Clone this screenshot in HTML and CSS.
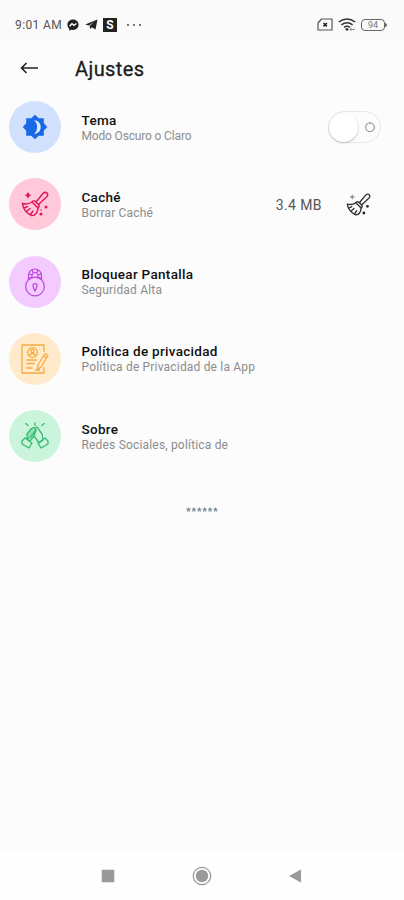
FILE: index.html
```html
<!DOCTYPE html>
<html lang="es">
<head>
<meta charset="utf-8">
<title>Ajustes</title>
<link rel="stylesheet" href="styles.css">
</head>
<body>
<svg class="defs" width="0" height="0" aria-hidden="true">
  <symbol id="broom" viewBox="0 0 28 28">
    <g fill="none" stroke="currentColor" stroke-width="1.5" stroke-linejoin="round" stroke-linecap="round">
      <path d="M15 12 L22 3.5 Q24 1.5 26 3 Q27.500 5 25.500 7 L17.500 14.500"/>
      <path d="M11 12 Q13 9.500 15 12 L17.500 14.500 Q19 16 17 18 Z"/>
      <path d="M11 12 Q7 15 1.500 13.500 Q2 21 10.500 25.500 Q16 26 17 18"/>
      <path d="M3 18 L6.500 16.500 M5.500 21.500 L9 18.500 M9.500 24.500 L12 21"/>
    </g>
  </symbol>
</svg>
<div class="screen">
  <header class="status">
    <span class="time">9:01 AM</span>
    <svg class="messenger" width="12" height="12" viewBox="0 0 12 12"><path fill="#222" d="M6 .5C2.700.5.4 2.800.4 5.800c0 1.700.7 3 1.800 3.900v2l1.800-1c.6.2 1.300.3 2 .3 3.300 0 5.600-2.300 5.600-5.200S9.300.5 6 .5z"/><path d="M2.500 7.300 5 4.700l2 1.700 2.500-1.900" fill="none" stroke="#fafafa" stroke-width="1.400"/></svg>
    <svg class="telegram" width="13" height="11" viewBox="0 0 13 11"><path fill="#222" d="M.3 5.400 12.500.5l-2 10-3.600-2.300-1.800 1.900-.5-3.300 5-4-6 3.600z"/></svg>
    <span class="app-badge">S</span>
    <span class="more"><i></i><i></i><i></i></span>
    <svg class="sim" width="16" height="13" viewBox="0 0 16 13"><path d="M4.500 1H15v11H1V5z" fill="none" stroke="#555" stroke-width="1.200" stroke-linejoin="round"/><path d="m6.500 5 3.400 3.400m0-3.400L6.500 8.400" stroke="#222" stroke-width="1.500"/></svg>
    <svg class="wifi" width="18" height="14" viewBox="0 0 18 14"><g fill="none" stroke="#333" stroke-width="1.500"><path d="M.8 4Q9-2 17.200 4M3.400 6.800q5.600-4.200 11.200 0M6 9.400q3-2.200 6 0"/></g><path d="m9 13-2-2q2-1.500 4 0z" fill="#222"/><path d="M12 11.500h5M13.500 10 12 11.500l1.500 1.500" fill="none" stroke="#777" stroke-width=".8"/></svg>
    <span class="battery">94</span>
  </header>
  <div class="toolbar">
    <svg width="19" height="14" viewBox="0 0 19 14"><path d="M18 6H1.500M6.500 1 1.500 6l5 5" fill="none" stroke="#222" stroke-width="1.600"/></svg>
    <h1>Ajustes</h1>
  </div>
  <main class="list">
    <section class="row">
      <span class="disc blue"><svg width="26" height="26" viewBox="0 0 26 26"><path fill="#1769e8" d="m13 .7 3.700 3.500h5.100v5.100l3.500 3.700-3.500 3.700v5.100h-5.100L13 25.300l-3.700-3.500H4.200v-5.100L.7 13l3.500-3.700V4.200h5.100z"/><path fill="#dceaff" d="M12 6.200c9 .1 9 13.500 0 13.600 4.200-3 4.200-10.600 0-13.600z"/></svg></span>
      <div class="copy"><h2>Tema</h2><p class="tight">Modo Oscuro o Claro</p></div>
      <span class="toggle"><svg width="12" height="12" viewBox="0 0 12 12"><circle cx="6" cy="6.300" r="4.300" fill="none" stroke="#999" stroke-width="1.200"/><path d="M6 .8v2" stroke="#999" stroke-width="1"/></svg></span>
    </section>
    <section class="row">
      <span class="disc pink"><svg width="28" height="28" viewBox="0 0 28 28"><use href="#broom"/><g fill="currentColor"><path d="m7 2 1.200 2 2 1.200-2 1.200-1.200 2-1.200-2-2-1.200 2-1.200z"/><circle cx="25" cy="17" r="1.500"/><circle cx="20" cy="24" r="1.600"/><circle cx="20" cy="20" r=".8"/></g></svg></span>
      <div class="copy"><h2>Caché</h2><p>Borrar Caché</p></div>
      <span class="size">3.4 MB</span>
      <svg class="clean" width="25" height="25" viewBox="0 0 28 28"><use href="#broom"/><path d="M7 3v5M4.500 5.500h5" stroke="#888" stroke-width="1.300"/><g fill="#222"><circle cx="24" cy="16" r="1.500"/><circle cx="20" cy="23.500" r="1.600"/></g></svg>
    </section>
    <section class="row">
      <span class="disc purple"><svg width="22" height="30" viewBox="0 0 22 30"><g fill="none" stroke="currentColor" stroke-width="1.200"><circle cx="11" cy="19.500" r="9.300"/><path d="M4.500 13V8.500a6.500 6.500 0 0 1 13 0V13M8 11V8.500a3 3 0 0 1 6 0V11M5 7l3 1M8 3l1.500 3M14 3l-1.500 3M17 7l-3 1M4.500 11.500 8 10M17.500 11.500 14 10"/><path d="M11 24c-1-2-2-4-2-5.300a2 2 0 0 1 4 0c0 1.300-1 3.300-2 5.300z"/></g></svg></span>
      <div class="copy"><h2>Bloquear Pantalla</h2><p>Seguridad Alta</p></div>
    </section>
    <section class="row">
      <span class="disc amber"><svg width="28" height="30" viewBox="0 0 28 30"><g fill="none" stroke="currentColor" stroke-width="1.300" stroke-linejoin="round"><path d="M23 8V1H1v28h22v-6"/><circle cx="11.500" cy="8.500" r="4.800"/><circle cx="11.500" cy="7" r="1.600"/><path d="M8 12q3.500-5 7 0M5.500 16h10M5.500 19.500h8M5.500 24h6"/><path d="M24 9.500 27 11.500 20 23l-3.500 2.500.5-4.500z"/><path d="M22.500 12 25.500 14M14 26h5"/></g></svg></span>
      <div class="copy"><h2>Política de privacidad</h2><p>Política de Privacidad de la App</p></div>
    </section>
    <section class="row">
      <span class="disc green"><svg width="28" height="28" viewBox="0 0 28 28"><g fill="none" stroke="currentColor" stroke-width="1.300" stroke-linejoin="round" stroke-linecap="round"><path d="M14 1v2.500M5 1.500 7 3.500M23 1.500 21 3.500"/><path fill="#8fe0b3" d="M6 17V12l4-5q2-2 3.500-1L15 8l-5 7z"/><path d="m14 6 2-1 5 7 1 6M15 8l-2 6-4 5-3-2M13 14l5 7 4-3M1 19l3-3 7 5-3 5-7-4zM27 19l-3-3-7 5 3 5 7-4z"/></g></svg></span>
      <div class="copy"><h2>Sobre</h2><p>Redes Sociales, política de</p></div>
    </section>
  </main>
  <div class="stars"><i></i><i></i><i></i><i></i><i></i><i></i></div>
  <nav class="nav">
    <svg width="14" height="14" viewBox="0 0 14 14"><rect x=".7" y=".7" width="12.600" height="12.600" rx="1" fill="#999"/></svg>
    <svg width="20" height="20" viewBox="0 0 20 20"><circle cx="10" cy="10" r="8.700" fill="none" stroke="#999" stroke-width="1.200"/><circle cx="10" cy="10" r="6.200" fill="#999"/></svg>
    <svg width="14" height="14" viewBox="0 0 14 14"><path d="M1 7 13 .5v13z" fill="#999"/></svg>
  </nav>
</div>
</body>
</html>
```
FILE: styles.css
```css
* { box-sizing: border-box; }
body { margin: 0; background: #fcfcfc; font-family: Roboto, "Liberation Sans", sans-serif; }
h1, h2, p { margin: 0; white-space: nowrap; }
svg { display: block; flex: none; }
.defs { display: none; }
.screen { width: 404px; height: 900px; display: flex; flex-direction: column; overflow: hidden; }

.status { height: 38px; background: #fafafa; display: flex; align-items: center; padding: 11px 17px 0 15px; color: #555; }
.time { width: 48px; font-size: 12px; letter-spacing: .4px; line-height: 14px; white-space: nowrap; }
.messenger { margin-left: 4px; }
.telegram { margin-left: 6px; }
.app-badge { width: 14px; height: 14px; margin-left: 5px; background: #222; color: #fff; font-size: 12px; font-weight: 700; line-height: 14px; text-align: center; }
.more { display: flex; gap: 4px; margin-left: 10px; }
.more i { width: 2px; height: 2px; background: #777; }
.sim { margin-left: auto; }
.wifi { margin-left: 5px; }
.battery { width: 24px; height: 12px; margin: 0 2px 0 5px; border: 1.5px solid #666; border-radius: 4px; font-size: 9px; line-height: 10px; text-align: center; color: #777; position: relative; }
.battery::after { content: ""; position: absolute; right: -3px; top: 3px; width: 2px; height: 4px; border-radius: 0 2px 2px 0; background: #666; }

.toolbar { height: 63px; display: flex; align-items: center; padding: 0 0 2px 20px; gap: 36px; }
h1 { font-size: 20px; line-height: 24px; font-weight: 400; letter-spacing: .4px; color: #1c1c1c; -webkit-text-stroke: .3px #1c1c1c; }

.row { height: 77.3px; display: flex; align-items: flex-start; padding-left: 9px; }
.disc { width: 52px; height: 52px; border-radius: 50%; flex: none; display: grid; place-items: center; }
.blue { background: #d1e1fd; }
.pink { background: #ffc9da; color: #e2195d; }
.purple { background: #f3cbff; color: #bd43dc; }
.amber { background: #ffebcb; color: #f5ad3c; }
.green { background: #cbf4dc; color: #35bc70; }
.copy { margin: 10.5px 0 0 20.5px; }
h2 { font-size: 13.5px; line-height: 16px; font-weight: 500; letter-spacing: .3px; color: #111; }
p { font-size: 12px; line-height: 15px; letter-spacing: .18px; color: #8c8c8c; margin-top: 1px; }
.tight { letter-spacing: -.16px; }
.toggle { width: 53px; height: 32px; margin: 10px 23px 0 auto; border: 1px solid #e6e6e6; border-radius: 16px; display: flex; align-items: center; justify-content: space-between; padding-right: 4px; }
.toggle::before { content: ""; width: 29px; height: 29px; border-radius: 50%; background: #fff; box-shadow: 0 1px 2px #bbb; }
.size { margin: 18px 0 0 auto; font-size: 14px; line-height: 18px; letter-spacing: .4px; color: #555; }
.clean { margin: 14px 33px 0 24px; color: #333; }

.stars { display: flex; justify-content: center; gap: .4px; margin-top: 19.5px; }
.stars i { width: 5px; height: 5px; background: #8196a1; clip-path: polygon(50% 0, 65% 30%, 100% 35%, 75% 60%, 85% 100%, 50% 80%, 15% 100%, 25% 60%, 0 35%, 35% 30%); }

.nav { margin-top: auto; height: 47px; background: #fefefe; display: flex; align-items: center; justify-content: space-between; padding: 0 102px 1px 101px; }
```
